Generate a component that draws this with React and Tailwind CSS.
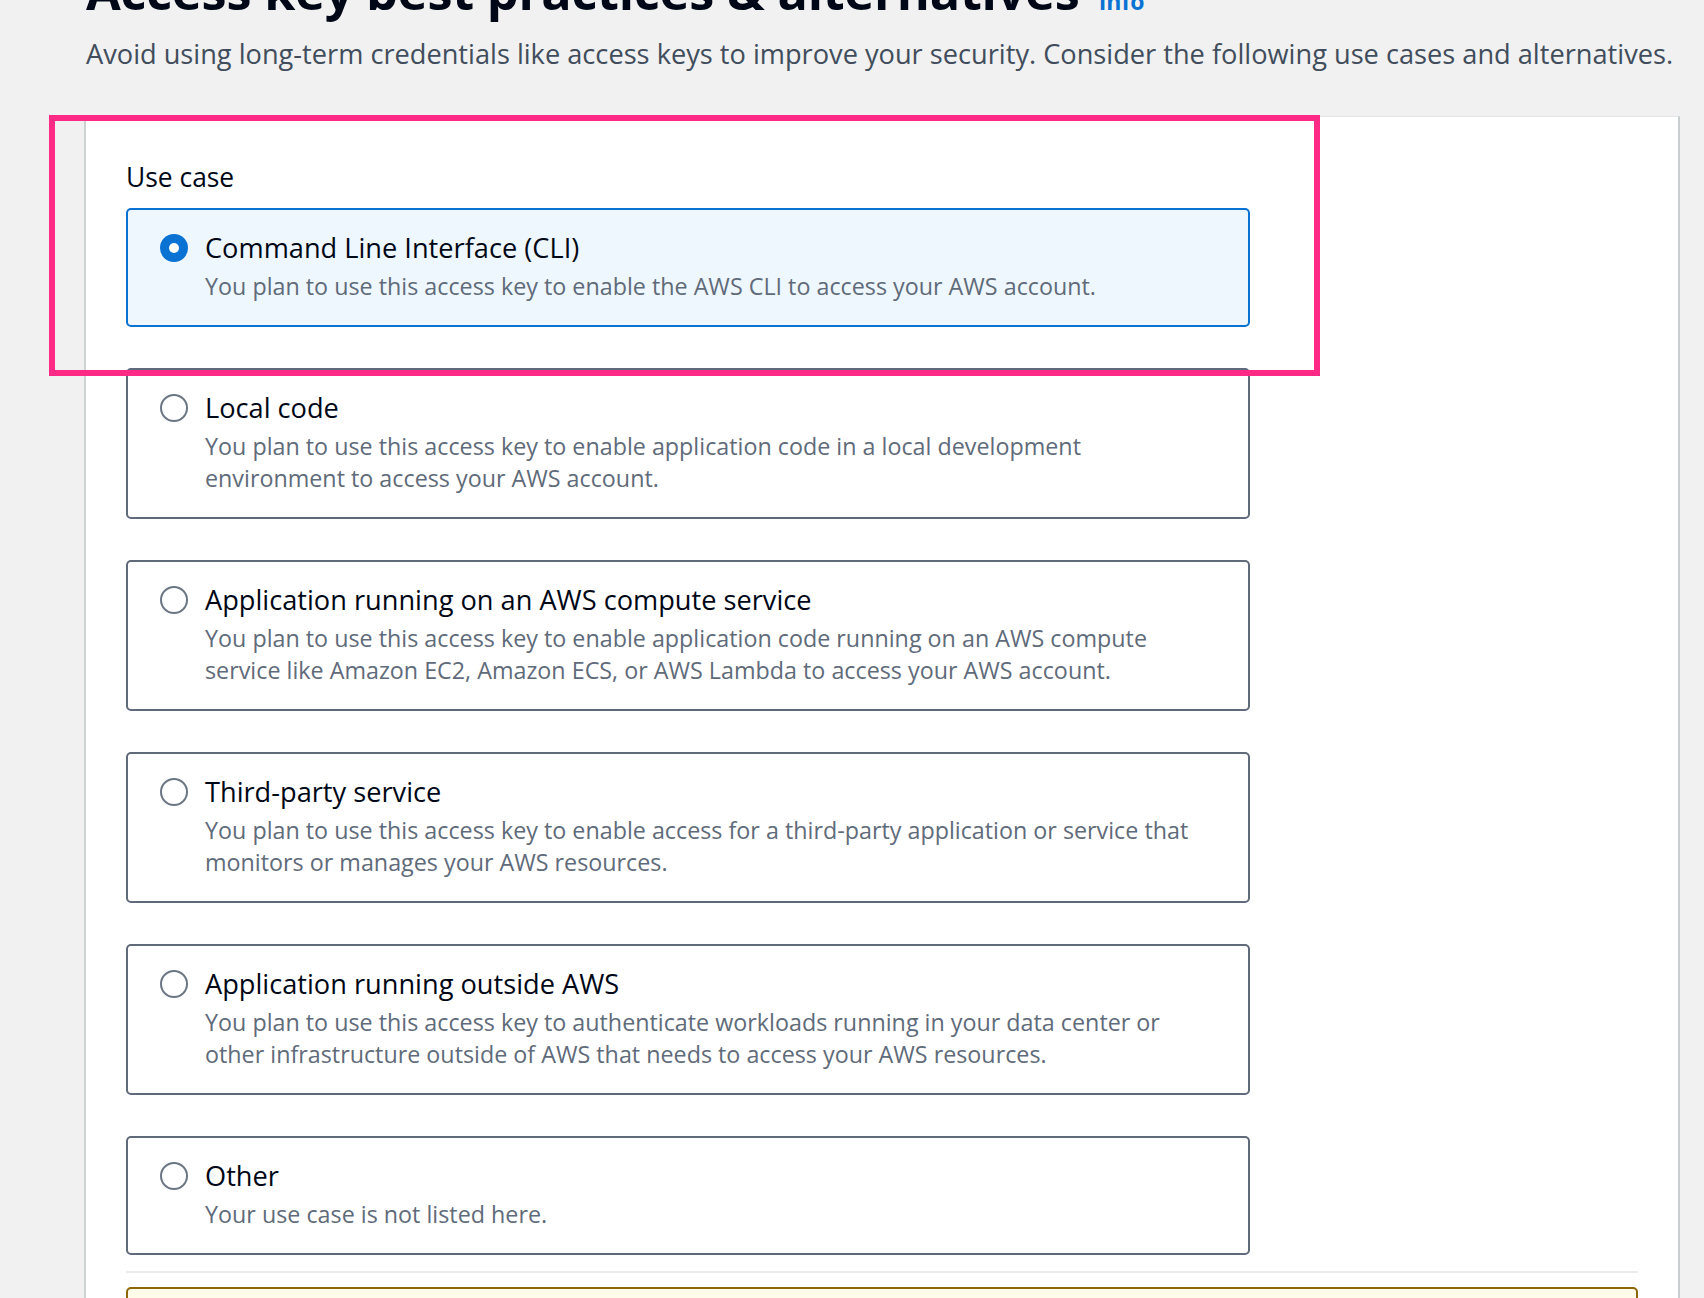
import React from "react";

const options = [
  {
    title: "Command Line Interface (CLI)",
    desc: ["You plan to use this access key to enable the AWS CLI to access your AWS account."],
    selected: true,
  },
  {
    title: "Local code",
    desc: [
      "You plan to use this access key to enable application code in a local development",
      "environment to access your AWS account.",
    ],
  },
  {
    title: "Application running on an AWS compute service",
    desc: [
      "You plan to use this access key to enable application code running on an AWS compute",
      "service like Amazon EC2, Amazon ECS, or AWS Lambda to access your AWS account.",
    ],
  },
  {
    title: "Third-party service",
    desc: [
      "You plan to use this access key to enable access for a third-party application or service that",
      "monitors or manages your AWS resources.",
    ],
  },
  {
    title: "Application running outside AWS",
    desc: [
      "You plan to use this access key to authenticate workloads running in your data center or",
      "other infrastructure outside of AWS that needs to access your AWS resources.",
    ],
  },
  {
    title: "Other",
    desc: ["Your use case is not listed here."],
  },
];

function Radio({ checked }) {
  return (
    <svg width="28" height="28" viewBox="0 0 28 28" className="shrink-0">
      {checked ? (
        <>
          <circle cx="14" cy="14" r="14" fill="#0972d3" />
          <circle cx="14" cy="14" r="5" fill="#ffffff" />
        </>
      ) : (
        <circle cx="14" cy="14" r="13" fill="#ffffff" stroke="#6b7684" strokeWidth="2" />
      )}
    </svg>
  );
}

function Tile({ opt }) {
  return (
    <div
      className={
        opt.selected
          ? "rounded-[5px] border-2 border-[#0972d3] bg-[#eef7fd] pl-[32px] pr-6 pt-[22px] pb-[23px]"
          : "rounded-[5px] border-2 border-[#5f6b7a] bg-white pl-[32px] pr-6 pt-[22px] pb-[23px]"
      }
    >
      <div className="flex items-center gap-[17px] h-[32px]">
        <Radio checked={opt.selected} />
        <span className="text-[27.2px] leading-[32px] text-[#000716] whitespace-nowrap">{opt.title}</span>
      </div>
      <div className="pl-[45px] mt-[6px] text-[23.3px] leading-[32px] text-[#5f6b7a]">
        {opt.desc.map((l, i) => (
          <div key={i} className="whitespace-nowrap">{l}</div>
        ))}
      </div>
    </div>
  );
}

export default function App() {
  return (
    <div
      className="relative h-[1298px] overflow-hidden bg-[#f0f1f0]"
      style={{ fontFamily: '"Open Sans", "Noto Sans", Arial, sans-serif' }}
    >
      <div className="pl-[86px] mt-[-39px]">
        <div className="flex items-baseline gap-[19px]">
          <h1 className="text-[50.4px] leading-[60px] font-bold text-[#000716] whitespace-nowrap tracking-[-0.2px]">
            Access key best practices &amp; alternatives
          </h1>
          <span className="text-[23px] font-bold text-[#0972d3]">Info</span>
        </div>
        <p className="mt-[15px] text-[27.2px] leading-[36px] text-[#414d5c] whitespace-nowrap">
          Avoid using long-term credentials like access keys to improve your security. Consider the following use cases and alternatives.
        </p>
      </div>

      <div className="ml-[84px] mt-[44px] w-[1596px] bg-white border-t border-t-[#e3e6e6] border-l-2 border-r-2 border-l-[#cdd2d3] border-r-[#c8cdcf] pl-[40px] pr-[40px] pt-[44px] pb-[40px]">
        <div className="text-[26.4px] leading-[32px] text-[#000716]">Use case</div>
        <div className="mt-[15px] w-[1124px] flex flex-col gap-[41px]">
          {options.map((o, i) => (
            <Tile key={i} opt={o} />
          ))}
        </div>
        <div className="mt-[16px] h-[2px] bg-[#e9ebed]" />
        <div className="mt-[14px] h-[120px] rounded-[5px] border-2 border-[#8d6605] bg-[#fffce9]" />
      </div>

      <div className="absolute left-[49px] top-[115px] w-[1271px] h-[261px] border-[6px] border-[#ff2a86] pointer-events-none" />
    </div>
  );
}
